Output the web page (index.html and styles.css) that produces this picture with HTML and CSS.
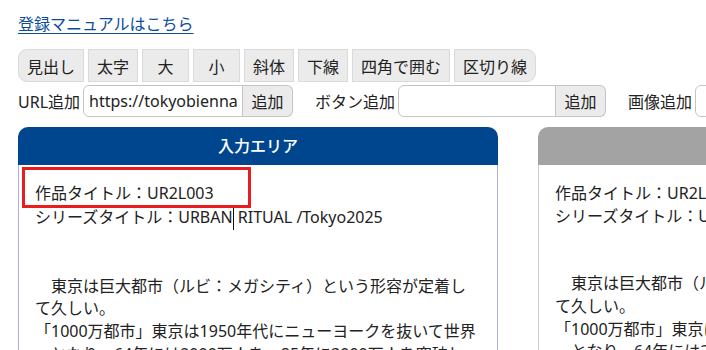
FILE: index.html
```html
<!DOCTYPE html>
<html lang="ja">
<head>
    <meta charset="UTF-8" />
    <meta name="viewport" content="width=device-width, initial-scale=1.0">
    <title>作品登録</title>
    <link rel="stylesheet" href="styles.css">
</head>
<body>
    <div class="editor">
        <p class="manual"><a href="#">登録マニュアルはこちら</a></p>

        <!-- Formatting toolbar -->
        <div class="toolbar">
            <button class="tool-btn">見出し</button>
            <button class="tool-btn">太字</button>
            <button class="tool-btn">大</button>
            <button class="tool-btn">小</button>
            <button class="tool-btn">斜体</button>
            <button class="tool-btn">下線</button>
            <button class="tool-btn">四角で囲む</button>
            <button class="tool-btn">区切り線</button>
        </div>

        <!-- Insert row -->
        <div class="insert-row">
            <div class="insert-field">
                <label for="url-input">URL追加</label>
                <div class="input-group input-url">
                    <input type="text" id="url-input" value="https://tokyobiennale.jp/artwork/" />
                    <button>追加</button>
                </div>
            </div>
            <div class="insert-field">
                <label for="btn-input">ボタン追加</label>
                <div class="input-group">
                    <input type="text" id="btn-input" />
                    <button>追加</button>
                </div>
            </div>
            <div class="insert-field">
                <label for="img-input">画像追加</label>
                <div class="input-group">
                    <input type="text" id="img-input" />
                    <button>追加</button>
                </div>
            </div>
        </div>

        <!-- Input / preview panes -->
        <div class="panes">
            <section class="pane pane-input">
                <h3 class="pane-head">入力エリア</h3>
                <div class="pane-body">
                    <div class="pane-text">作品タイトル：UR2L003<br>シリーズタイトル：URBAN<span class="caret"></span> RITUAL /Tokyo2025<br><br><br>　東京は巨大都市（ルビ：メガシティ）という形容が定着して久しい。<br>「1000万都市」東京は1950年代にニューヨークを抜いて世界一となり、64年には2000万人を、85年に3000万人を突破した。</div>
                    <div class="highlight"></div>
                </div>
            </section>
            <section class="pane pane-preview">
                <h3 class="pane-head">&nbsp;</h3>
                <div class="pane-body">
                    <div class="pane-text">作品タイトル：UR2L003<br>シリーズタイトル：URBAN RITUAL /Tokyo2025<br><br><br>　東京は巨大都市（ルビ：メガシティ）という形容が定着して久しい。<br>「1000万都市」東京は1950年代にニューヨークを抜いて世界一となり、64年には2000万人を、85年に3000万人を突破した。</div>
                </div>
            </section>
        </div>
    </div>
</body>
</html>
```

FILE: styles.css
```css
:root {
    --text-color: #222222;
    --link-color: #0b4c9b;
    --btn-bg: #ebebeb;
    --btn-border: #dadada;
    --input-border: #c4c4c4;
    --input-head: #00468f;
    --input-border-soft: #aeaee6;
    --preview-head: #a3a3a3;
    --preview-border: #cccccc;
    --mark-color: #ea1c1f;
}

* {
    margin: 0;
    padding: 0;
    box-sizing: border-box;
}

html, body {
    overflow: hidden;
}

body {
    font-family: "Noto Sans", "Noto Sans CJK JP", sans-serif;
    font-size: 16px;
    color: var(--text-color);
    background-color: #ffffff;
}

.editor {
    padding: 13px 18px 0;
    width: 1100px;
}

.manual {
    line-height: 23px;
    margin-bottom: 13px;
}

.manual a {
    color: var(--link-color);
    text-decoration: underline;
    text-underline-offset: 3px;
}

.toolbar {
    display: flex;
    gap: 4px;
}

button {
    font-family: inherit;
    font-size: 16px;
    color: var(--text-color);
    background-color: var(--btn-bg);
    border: 1px solid var(--btn-border);
    cursor: pointer;
}

.tool-btn {
    height: 33px;
    min-width: 47px;
    padding: 0 8px;
}

.tool-btn:first-child {
    border-radius: 9px 0 0 9px;
}

.tool-btn:last-child {
    border-radius: 0 9px 9px 0;
}

.insert-row {
    display: flex;
    gap: 22px;
    margin-top: 3px;
}

.insert-field {
    display: flex;
    align-items: center;
    gap: 3px;
}

.insert-field label {
    white-space: nowrap;
}

.input-group {
    display: flex;
    height: 32px;
}

.input-group input {
    width: 158px;
    font-family: inherit;
    font-size: 16px;
    color: var(--text-color);
    padding: 0 5px;
    border: 1px solid var(--input-border);
    border-radius: 6px 0 0 6px;
}

.input-url input {
    width: 160px;
}

.input-group button {
    width: 50px;
    border-color: var(--input-border);
    border-left: none;
    border-radius: 0 6px 6px 0;
}

.panes {
    display: flex;
    gap: 40px;
    margin-top: 10px;
}

.pane {
    width: 480px;
    flex-shrink: 0;
}

.pane-head {
    height: 38px;
    line-height: 38px;
    text-align: center;
    font-size: 16px;
    font-weight: 500;
    color: #ffffff;
    border-radius: 10px 10px 0 0;
}

.pane-input .pane-head {
    background-color: var(--input-head);
}

.pane-preview .pane-head {
    background-color: var(--preview-head);
}

.pane-body {
    position: relative;
    height: 400px;
    padding: 17px 16px 0;
    border: 1px solid var(--input-border-soft);
    border-top: none;
}

.pane-preview .pane-body {
    border-color: var(--preview-border);
}

.pane-text {
    line-height: 22.6px;
}

.caret {
    display: inline-block;
    width: 0;
    height: 25px;
    border-left: 1px solid #111111;
    vertical-align: -7px;
}

/* red marker drawn over the first line */
.highlight {
    position: absolute;
    left: 3px;
    top: 2px;
    width: 229px;
    height: 41px;
    border: 3px solid var(--mark-color);
}
```
